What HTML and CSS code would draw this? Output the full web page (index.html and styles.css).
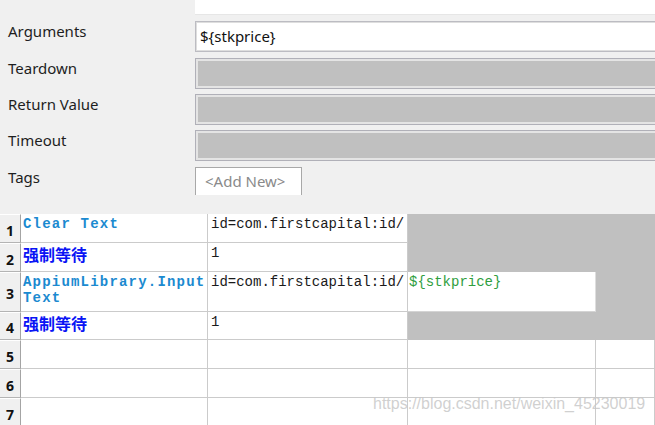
FILE: index.html
```html
<!DOCTYPE html>
<html>
<head>
<meta charset="utf-8">
<link rel="stylesheet" href="styles.css">
</head>
<body>
<div class="page">
  <div class="form">
    <div class="strip"></div>
    <div class="row row-args">
      <div class="label">Arguments</div>
      <div class="field">${stkprice}</div>
    </div>
    <div class="row row-gap6">
      <div class="label">Teardown</div>
      <div class="field disabled"></div>
    </div>
    <div class="row row-gap5">
      <div class="label">Return Value</div>
      <div class="field disabled"></div>
    </div>
    <div class="row row-gap5">
      <div class="label">Timeout</div>
      <div class="field disabled"></div>
    </div>
    <div class="row row-gap6">
      <div class="label">Tags</div>
      <div class="tagbox">&lt;Add New&gt;</div>
    </div>
  </div>

  <div class="grid">
    <div class="hdr">1</div>
    <div class="cell kw-lib">Clear Text</div>
    <div class="cell arg">id=com.firstcapital:id/</div>
    <div class="cell gray"></div>
    <div class="cell gray"></div>

    <div class="hdr">2</div>
    <div class="cell kw-user">强制等待</div>
    <div class="cell arg">1</div>
    <div class="cell gray"></div>
    <div class="cell gray"></div>

    <div class="hdr">3</div>
    <div class="cell kw-lib">AppiumLibrary.Input Text</div>
    <div class="cell arg">id=com.firstcapital:id/</div>
    <div class="cell var-cell"><span class="var">${stkprice}</span></div>
    <div class="cell gray"></div>

    <div class="hdr">4</div>
    <div class="cell kw-user">强制等待</div>
    <div class="cell arg">1</div>
    <div class="cell gray"></div>
    <div class="cell gray"></div>

    <div class="hdr">5</div>
    <div class="cell"></div>
    <div class="cell"></div>
    <div class="cell"></div>
    <div class="cell"></div>

    <div class="hdr">6</div>
    <div class="cell"></div>
    <div class="cell"></div>
    <div class="cell"></div>
    <div class="cell"></div>

    <div class="hdr">7</div>
    <div class="cell"></div>
    <div class="cell"></div>
    <div class="cell"></div>
    <div class="cell"></div>
  </div>

  <div class="watermark">https://blog.csdn.net/weixin_45230019</div>
</div>
</body>
</html>
```

FILE: styles.css
```css
* { box-sizing: border-box; }

html, body {
  margin: 0;
  padding: 0;
  background: #f0f0f0;
}

.page {
  position: relative;
  width: 655px;
  height: 425px;
  overflow: hidden;
  background: #f0f0f0;
  font-family: "Noto Sans", "Liberation Sans", sans-serif;
}

/* ---------- form ---------- */
.form {
  display: flex;
  flex-direction: column;
}

.strip {
  margin-left: 195px;
  width: 520px;
  height: 15px;
  background: #ffffff;
  border-bottom: 1px solid #e6e6e6;
}

.row {
  display: flex;
  align-items: flex-start;
  padding-left: 8px;
}

.row-args { margin-top: 6px; }
.row-gap6 { margin-top: 6px; }
.row-gap5 { margin-top: 5px; }

.label {
  width: 187px;
  flex: none;
  font-size: 15px;
  line-height: 20px;
  color: #1e1e1e;
}

.field {
  flex: none;
  width: 520px;
  height: 31px;
  background: #ffffff;
  border: 1px solid #bcbcc2;
  box-shadow: inset 0 0 0 1px #dedede;
  font-size: 15px;
  line-height: 29px;
  padding-left: 4px;
  color: #111;
  white-space: nowrap;
}

.field.disabled {
  background: #c0c0c0;
  border: 1px solid #b0b0b8;
  box-shadow: inset 0 0 0 2px #e4e4e4;
}

.tagbox {
  flex: none;
  width: 107px;
  height: 28px;
  background: #ffffff;
  border: 1px solid #a8a8a8;
  border-bottom: none;
  font-size: 15px;
  line-height: 26px;
  color: #8a8a8a;
  padding-left: 9px;
  white-space: nowrap;
}

/* ---------- grid ---------- */
.grid {
  margin-top: 19px;
  display: grid;
  grid-template-columns: 21px 187px 200px 188px 1fr;
  grid-template-rows: 29px 29px 40px 28px 29px 29px 29px;
  background: #ffffff;
}

.hdr {
  background: #f0f0f0;
  border-right: 1px solid #a4a4a4;
  border-bottom: 1px solid #b4b4b4;
  border-top: 1px solid #ffffff;
  font-family: "Noto Sans", "Liberation Sans", sans-serif;
  font-weight: 700;
  font-size: 14px;
  color: #111;
  display: flex;
  align-items: center;
  justify-content: center;
  padding-top: 3px;
}

.cell {
  background: #ffffff;
  border-right: 1px solid #cbcbcb;
  border-bottom: 1px solid #cbcbcb;
  overflow: hidden;
  padding: 2px 0 0 2px;
  font-family: "Liberation Mono", monospace;
  font-size: 14px;
  line-height: 16px;
  color: #1a1a1a;
}

.cell.arg {
  padding-left: 3px;
  white-space: nowrap;
}

.cell.gray {
  background: #c0c0c0;
  border-color: #c0c0c0;
}

.cell.var-cell {
  border-right-color: #dedede;
  border-bottom-color: #d4d4d4;
  padding-left: 1px;
}

.var { color: #2f9e3e; }

.kw-lib {
  color: #1b8ad0;
  font-weight: 700;
  letter-spacing: 1.2px;
}

.kw-user {
  color: #0a14f5;
  font-family: "Noto Sans CJK SC", sans-serif;
  font-weight: 700;
  font-size: 16px;
  line-height: 22px;
  padding-top: 0;
}

/* ---------- watermark overlay ---------- */
.watermark {
  position: absolute;
  left: 373px;
  top: 395px;
  font-family: "Liberation Sans", Arial, sans-serif;
  font-size: 16px;
  color: rgba(200, 200, 200, 0.85);
  white-space: nowrap;
  pointer-events: none;
}
```
